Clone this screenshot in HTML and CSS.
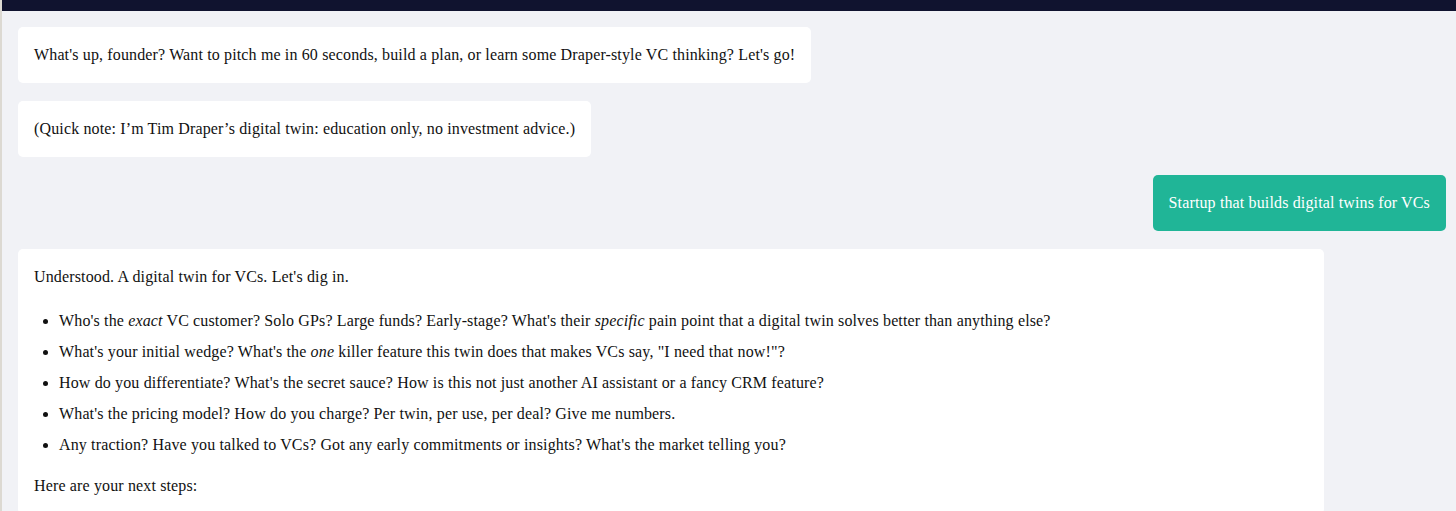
FILE: index.html
```html
<!DOCTYPE html>
<html lang="en">
<head>
<meta charset="utf-8">
<title>Tim Draper Digital Twin</title>
<link rel="stylesheet" href="styles.css">
</head>
<body>
<div class="topbar"></div>
<main class="chat">
  <div class="msg bot"><p>What's up, founder? Want to pitch me in 60 seconds, build a plan, or learn some Draper-style VC thinking? Let's go!</p></div>
  <div class="msg bot"><p>(Quick note: I’m Tim Draper’s digital twin: education only, no investment advice.)</p></div>
  <div class="msg user"><p>Startup that builds digital twins for VCs</p></div>
  <div class="msg bot wide">
    <p>Understood. A digital twin for VCs. Let's dig in.</p>
    <ul>
      <li>Who's the <em>exact</em> VC customer? Solo GPs? Large funds? Early-stage? What's their <em>specific</em> pain point that a digital twin solves better than anything else?</li>
      <li>What's your initial wedge? What's the <em>one</em> killer feature this twin does that makes VCs say, "I need that now!"?</li>
      <li>How do you differentiate? What's the secret sauce? How is this not just another AI assistant or a fancy CRM feature?</li>
      <li>What's the pricing model? How do you charge? Per twin, per use, per deal? Give me numbers.</li>
      <li>Any traction? Have you talked to VCs? Got any early commitments or insights? What's the market telling you?</li>
    </ul>
    <p>Here are your next steps:</p>
  </div>
</main>
</body>
</html>
```

FILE: styles.css
```css
html, body {
  margin: 0;
  padding: 0;
  height: 100%;
  overflow: hidden;
}
body {
  background: #f1f2f6;
  font-family: "Liberation Serif", "Times New Roman", serif;
  font-size: 16px;
  line-height: 24px;
  letter-spacing: 0.14px;
  color: #111111;
  border-left: 2px solid #dcd9d2;
  box-sizing: border-box;
}
.topbar {
  height: 11px;
  background: #10132f;
}
.chat {
  display: flex;
  flex-direction: column;
  align-items: flex-start;
  gap: 18px;
  padding: 16px 10px 16px 16px;
}
.msg {
  background: #ffffff;
  border-radius: 5px;
  padding: 16px;
  max-width: 1274px;
}
.msg p {
  margin: 0;
}
.msg.user {
  align-self: flex-end;
  background: #20b597;
  color: #ffffff;
}
.msg.wide {
  width: 1274px;
}
.msg ul {
  margin: 20px 0 17px;
  padding-left: 25px;
}
.msg li {
  margin-bottom: 7px;
}
.msg li:last-child {
  margin-bottom: 0;
}
```
